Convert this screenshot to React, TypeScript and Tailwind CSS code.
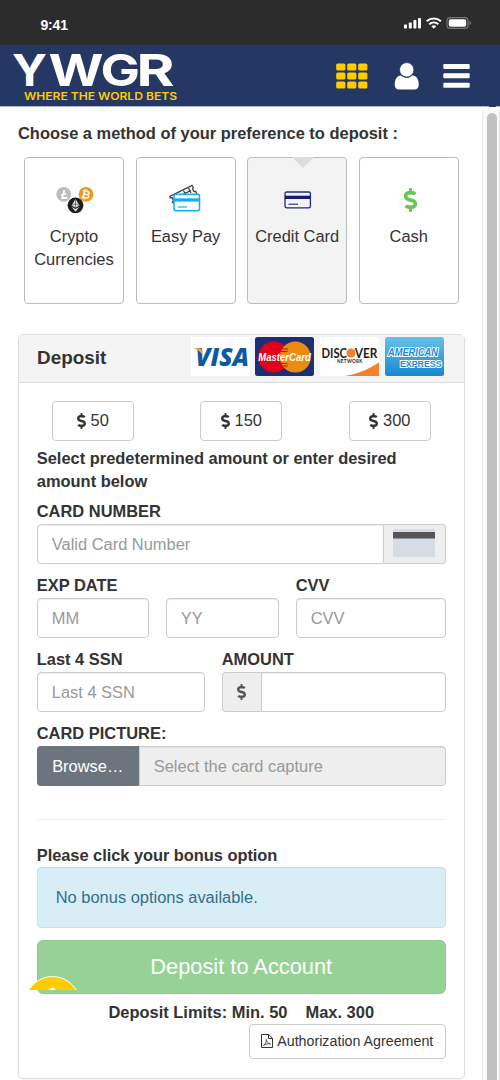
import type { ReactNode } from "react";
import { FaDollarSign } from "react-icons/fa";

function StatusBar() {
  return (
    <div className="flex h-[45px] shrink-0 items-center justify-between bg-[#2c2c2c] pr-[28px] pl-[40.5px] text-white">
      <span className="mt-[5px] font-['Liberation_Sans'] text-[14px] leading-none font-bold tracking-[-0.2px]">9:41</span>
      <svg width="68" height="14" viewBox="0 0 68 14" fill="white">
        <rect x="0" y="8.5" width="3" height="4" rx="0.8" />
        <rect x="4.8" y="6.5" width="3" height="6" rx="0.8" />
        <rect x="9.4" y="4" width="3" height="8.5" rx="0.8" />
        <rect x="14" y="2" width="3" height="10.5" rx="0.8" />
        <path d="M22.7 5.3a10.6 10.6 0 0 1 14.2 0" fill="none" stroke="white" strokeWidth="2.1" />
        <path d="M25.2 8.2a7 7 0 0 1 9.2 0" fill="none" stroke="white" strokeWidth="2" />
        <path d="M27.3 10.3a4 4 0 0 1 5 0L29.8 12.8z" />
        <rect x="43" y="1.6" width="21" height="10.8" rx="3" fill="none" stroke="#777" strokeWidth="1.1" />
        <rect x="44.8" y="3.3" width="17.4" height="7.4" rx="1.6" />
        <path d="M65.5 5v4c2-.6 2-3.4 0-4z" fill="#777" />
      </svg>
    </div>
  );
}

function Logo() {
  return (
    <svg
      className="overflow-visible"
      width="170"
      height="54"
      viewBox="0 0 170 54"
      fontFamily="Inter, 'Liberation Sans', sans-serif"
      fontWeight="700"
    >
      <g fill="white" fontSize="44">
        <text x="0" y="38.2" textLength="35" lengthAdjust="spacingAndGlyphs">Y</text>
        <text x="36.5" y="38.2" textLength="55" lengthAdjust="spacingAndGlyphs">W</text>
        <text x="88.5" y="38.2" textLength="39.5" lengthAdjust="spacingAndGlyphs">G</text>
        <text x="124.5" y="38.2" textLength="38" lengthAdjust="spacingAndGlyphs">R</text>
      </g>
      <text x="12" y="51.6" fontSize="10.3" fontWeight="600" fill="#ffcc00" textLength="153" lengthAdjust="spacingAndGlyphs">
        WHERE THE WORLD BETS
      </text>
    </svg>
  );
}

function Header() {
  return (
    <header className="relative flex h-[62px] shrink-0 items-start justify-between border-b border-[#a9b8d0] bg-[#243863] pr-[30px] pl-[12px]">
      <div className="pt-[3px]">
        <Logo />
      </div>
      <div className="flex items-center pt-[17px]">
        <svg width="32" height="26" viewBox="0 0 32 26" fill="#ffcc00">
          {[0, 9, 18].map((y) =>
            [0, 11, 22].map((x) => <rect key={`${x}-${y}`} x={x + 0.2} y={y + 0.4} width="9.2" height="7.2" rx="1.5" />)
          )}
        </svg>
        <svg className="ml-[26px]" width="26" height="28" viewBox="0 0 26 28" fill="white">
          <path d="M7 13.5C2.5 13.5.7 18 .7 23c0 2.7 1.7 4.5 4.3 4.5h15.4c2.6 0 4.4-1.8 4.4-4.5 0-5-1.8-9.5-6.4-9.5-1.7 1.5-3.7 2.3-5.7 2.3s-4-.8-5.7-2.3z" />
          <circle cx="12.7" cy="7.8" r="7.2" stroke="#243863" strokeWidth="0.8" />
        </svg>
        <svg className="ml-[23px]" width="27" height="26" viewBox="0 0 27 26" fill="white">
          <rect x="0.3" y="1" width="26.4" height="5" rx="1" />
          <rect x="0.3" y="10.3" width="26.4" height="5" rx="1" />
          <rect x="0.3" y="19.7" width="26.4" height="5" rx="1" />
        </svg>
      </div>
      <span className="absolute right-[4px] -bottom-px h-px w-[7px] bg-[#243863]" />
    </header>
  );
}

const CryptoIcon = (
  <svg className="ml-px" width="38" height="28" viewBox="0 0 38 28" fontFamily="'Liberation Sans', sans-serif" fontWeight="700" textAnchor="middle">
    <circle cx="7.7" cy="8.3" r="7.4" fill="#bdbdbd" />
    <path d="M8.3 4 6.3 12h5M5 9.4l5.2-1.8" fill="none" stroke="white" strokeWidth="1.8" />
    <circle cx="30" cy="8.3" r="7.4" fill="#f7931a" />
    <text x="30" y="12.3" fontSize="11" fill="white" transform="rotate(12 30 8.3)">₿</text>
    <circle cx="19.5" cy="19.3" r="7.9" fill="#1c1c1c" />
    <path d="m19.5 13-4 6.5 4 2.3 4-2.3zM15.5 20.8l4 5 4-5-4 2.2z" fill="#ddd" />
    <path d="M19.5 13v9M15.5 19.5l4-1.8 4 1.8" fill="none" stroke="#555" strokeWidth="0.7" />
  </svg>
);

const EasyPayIcon = (
  <svg className="mr-[2px] mb-[5px]" width="34" height="28" viewBox="0 0 34 28" fill="none">
    <g stroke="#444" strokeWidth="1.3">
      <path d="M6 19.500 2.800 18l1.200-1.800-1.300-2.800-2 .2-.3-1.600L22.500 1l1.300 2.300-.7 1.600 1.200 2.200 2 .1 1.200 2.600" transform="translate(1.5 .3)" />
      <path d="m6 14.800 17-8.500M15.500 6.500l2 4M20.500 4l2.500 5M5 17l3-1.600" />
    </g>
    <rect x="6" y="10.3" width="25.5" height="16.4" rx="2" fill="white" stroke="#12b1ee" strokeWidth="1.5" />
    <path d="M6 14.3h25.5v3.3H6z" fill="#12b1ee" />
    <path d="M10 23h9" stroke="#12b1ee" strokeWidth="1.2" />
  </svg>
);

const CreditCardIcon = (
  <svg className="ml-[2px]" width="28" height="18" viewBox="0 0 28 18" fill="none">
    <rect x="1" y="1" width="25.4" height="15.8" rx="1.6" stroke="#1f2a78" strokeWidth="1.3" />
    <path d="M1 4.7h25.5V8H1z" fill="#141c70" />
    <path d="M4.5 13.2H14" stroke="#1f2a78" strokeWidth="1.1" />
  </svg>
);

interface Method {
  label: string;
  icon: ReactNode;
  active?: boolean;
}

const methods: Method[] = [
  { label: "Crypto Currencies", icon: CryptoIcon },
  { label: "Easy Pay", icon: EasyPayIcon },
  { label: "Credit Card", icon: CreditCardIcon, active: true },
  { label: "Cash", icon: <FaDollarSign className="ml-[3px] h-[24px] w-[15px] text-[#6cc655]" /> },
];

function MethodCard({ label, icon, active }: Method) {
  return (
    <button
      className={`relative flex h-[147px] w-[100px] flex-col items-center rounded-[4px] border border-[#bbb] pt-[24px] ${
        active ? "bg-[#f3f3f3]" : "bg-white"
      }`}
    >
      {active && (
        <span className="absolute -top-px left-1/2 ml-[6px] h-0 w-0 -translate-x-1/2 border-x-[11px] border-t-[11px] border-x-transparent border-t-[#dcdcdc]" />
      )}
      <span className="flex h-[36px] items-center justify-center">{icon}</span>
      <span className="mt-[7px] leading-[23px]">{label}</span>
    </button>
  );
}

function CardBrands() {
  return (
    <div className="flex gap-[5.6px]">
      <svg width="59" height="39" viewBox="0 0 59 39">
        <rect width="59" height="39" fill="white" />
        <text x="4.5" y="28.8" fontFamily="'Open Sans', sans-serif" fontWeight="800" fontStyle="italic" fontSize="24.5" fill="#0a5aa4" textLength="53.5" lengthAdjust="spacingAndGlyphs">
          VISA
        </text>
        <path d="M1.5 11.3h7.2c1.1 0 1.7.6 1.9 1.5l1.4 6.5C10 14.8 6.5 12.6 1.5 11.3z" fill="#f9a51a" />
      </svg>
      <svg className="overflow-visible" width="59" height="39" viewBox="0 0 59 39">
        <rect width="59" height="39" rx="2.5" fill="#1b2f73" />
        <circle cx="18.7" cy="20" r="15.5" fill="#e2001a" />
        <circle cx="40.3" cy="20" r="15.5" fill="#ef8a10" />
        <path d="M26 12h7M25.5 14.5h7M25.5 26.5h7M26 29h7" stroke="#e2001a" strokeWidth="1.2" />
        <text x="3.3" y="24.4" fontFamily="'Liberation Sans', sans-serif" fontWeight="700" fontStyle="italic" fontSize="11.5" fill="white" textLength="52.5" lengthAdjust="spacingAndGlyphs">
          MasterCard
        </text>
      </svg>
      <svg width="59" height="39" viewBox="0 0 59 39" fontFamily="Lato, sans-serif">
        <rect width="59" height="39" rx="2.5" fill="white" />
        <g fill="#1c1c1c" fontWeight="700" fontSize="12.8">
          <text x="1.5" y="20.6" textLength="25.5" lengthAdjust="spacingAndGlyphs">DISC</text>
          <text x="34.8" y="20.6" textLength="22.7" lengthAdjust="spacingAndGlyphs">VER</text>
          <text x="17" y="26.2" fontSize="4.6" textLength="25.5">NETWORK</text>
        </g>
        <circle cx="31" cy="16" r="4.5" fill="#f58025" />
        <path d="M25 39c13-2 24-7 34-13.5V39z" fill="#f58025" />
      </svg>
      <svg className="overflow-visible" width="59" height="39" viewBox="0 0 59 39" fontFamily="'Liberation Sans', sans-serif">
        <defs>
          <linearGradient id="amex" x1="0" y1="0" x2="0" y2="1">
            <stop offset="0" stopColor="#65c1e8" />
            <stop offset="1" stopColor="#1689cf" />
          </linearGradient>
        </defs>
        <rect width="59" height="39" rx="2.5" fill="url(#amex)" />
        <g fill="#1c8cd0" stroke="white" strokeWidth="2" paintOrder="stroke" fontWeight="700" fontSize="9.8">
          <text x="3" y="19.2" fontStyle="italic" fontSize="10.5" textLength="50" lengthAdjust="spacingAndGlyphs">AMERICAN</text>
          <text x="15" y="29.6" textLength="41.5" lengthAdjust="spacingAndGlyphs">EXPRESS</text>
        </g>
      </svg>
    </div>
  );
}

const inputClass =
  "h-10 min-w-0 rounded-[4px] border border-[#ccc] bg-white px-[14px] pt-px shadow-[inset_0_1px_1px_rgba(0,0,0,0.075)] placeholder:text-[#999]";

function Field({ label, className, children }: { label: string; className?: string; children: ReactNode }) {
  return (
    <div className={`mb-[9px] min-w-0 ${className ?? ""}`}>
      <label className="block h-[25px] font-bold whitespace-nowrap leading-[25px]">{label}</label>
      <div className="flex">{children}</div>
    </div>
  );
}

function DepositPanel() {
  return (
    <section className="mt-[29.5px] h-[745px] w-[446.5px] shrink-0 rounded-[5px] border border-[#ddd] shadow-[0_1px_1px_rgba(0,0,0,0.05)]">
      <div className="flex h-[48px] items-start justify-between rounded-t-[4px] border-b border-[#ddd] bg-[#f4f4f4] pt-[2px] pr-[20px] pl-[18px]">
        <h2 className="text-[18.9px] leading-[42px] font-bold">Deposit</h2>
        <CardBrands />
      </div>

      <div className="px-[17.75px] pt-[18px]">
        <div className="flex justify-between px-[15px]">
          {[50, 150, 300].map((amount) => (
            <button key={amount} className="flex h-10 w-[82px] items-center justify-center rounded-[4px] border border-[#ccc]">
              <FaDollarSign className="mr-[5px] h-[16px] w-[9px]" />
              {amount}
            </button>
          ))}
        </div>

        <p className="mt-[6px] mb-[5.4px] font-bold">Select predetermined amount or enter desired amount below</p>

        <Field label="CARD NUMBER">
          <input className={`${inputClass} flex-1 rounded-r-none`} placeholder="Valid Card Number" />
          <span className="flex h-10 w-[62px] items-start justify-center rounded-r-[4px] border border-l-0 border-[#ccc] bg-[#eee] pt-[4px]">
            <svg width="42" height="28" viewBox="0 0 42 28">
              <rect width="42" height="28" rx="1" fill="#d5dce6" />
              <rect y="3" width="42" height="6.5" fill="#555" />
            </svg>
          </span>
        </Field>

        <div className="flex">
          <Field label="EXP DATE" className="w-[242px] shrink-0">
            <input className={`${inputClass} w-[112px]`} placeholder="MM" />
            <input className={`${inputClass} ml-[17px] w-[113px]`} placeholder="YY" />
          </Field>
          <Field label="CVV" className="ml-[17px] flex-1">
            <input className={`${inputClass} w-full`} placeholder="CVV" />
          </Field>
        </div>

        <div className="flex">
          <Field label="Last 4 SSN" className="w-[168px] shrink-0">
            <input className={`${inputClass} w-full`} placeholder="Last 4 SSN" />
          </Field>
          <Field label="AMOUNT" className="ml-[17px] flex-1">
            <span className="flex h-10 w-[39px] shrink-0 items-center justify-center rounded-l-[4px] border border-r-0 border-[#ccc] bg-[#eee] text-[#555]">
              <FaDollarSign className="h-[16px] w-[9px]" />
            </span>
            <input className={`${inputClass} flex-1 rounded-l-none`} />
          </Field>
        </div>

        <Field label="CARD PICTURE:">
          <button className="h-10 w-[102px] rounded-l-[4px] bg-[#6c757d] pt-px text-white">Browse…</button>
          <span className="flex h-10 flex-1 items-center rounded-r-[4px] border border-[#ccc] bg-[#eee] pt-px pl-[14px] text-[#999] shadow-[inset_0_1px_1px_rgba(0,0,0,0.075)]">
            Select the card capture
          </span>
        </Field>

        <hr className="mt-[33px] border-[#eee]" />

        <p className="mt-[24px] font-bold tracking-[-0.05px]">Please click your bonus option</p>
        <div className="flex h-[61px] items-center rounded-[4px] border border-[#bce8f1] bg-[#d9edf7] pt-px pl-[18px] text-[#31708f]">
          No bonus options available.
        </div>

        <div className="relative mt-[12px] h-[54px]">
          <button className="h-[54px] w-full rounded-[6px] border border-[#8acb8a] bg-[#96d296] pb-px text-[21.8px] text-white">
            Deposit to Account
          </button>
          {/* chat bubble peeking over the button's corner */}
          <svg className="absolute top-[36px] left-[-9px]" width="50" height="14" viewBox="0 0 50 14">
            <circle cx="24.5" cy="28" r="27.5" fill="#ffcc00" stroke="white" strokeWidth="1" />
            <circle cx="24.5" cy="14.5" r="3" fill="white" />
          </svg>
        </div>

        <p className="mt-[6.5px] text-center font-bold">
          Deposit Limits: Min. 50<span className="ml-[18px]">Max. 300</span>
        </p>
        <button className="ml-auto flex h-[35px] w-[197px] items-center justify-center rounded-[4px] border border-[#ccc] text-[14.25px] whitespace-nowrap">
          <svg className="mr-[4px]" width="12" height="14" viewBox="0 0 12 14" fill="none" stroke="currentColor">
            <path d="M.5.5h7.2l3.800 3.800v9.200H.5zM7.500.5v4h4" />
            <path d="M2.500 11.500c1.500-1 3-3.500 2.800-6 .5 2.500 1.700 4 4.200 4.500-2-.6-5 0-7 1.500z" strokeWidth="0.8" />
          </svg>
          Authorization Agreement
        </button>
      </div>
    </section>
  );
}

export default function App() {
  return (
    <div className="flex h-[1080px] w-[500px] flex-col overflow-hidden bg-white font-['Liberation_Sans',Arial,sans-serif] text-[16.45px] leading-[23.3px] text-[#333]">
      <StatusBar />
      <Header />
      <div className="flex min-h-0 flex-1">
        <main className="flex w-[482px] flex-col pt-[15px] pl-[18px]">
          <h1 className="font-bold">Choose a method of your preference to deposit :</h1>
          <div className="mt-[12px] ml-[6px] flex shrink-0 gap-[11.6px]">
            {methods.map((method) => (
              <MethodCard key={method.label} {...method} />
            ))}
          </div>
          <DepositPanel />
        </main>
        <div className="mt-[3px] flex w-[18px] border-x border-[#e8e8e8] bg-[#fafafa] pt-[3px] pl-[4px]">
          <div className="w-[10px] rounded-t-full bg-[#c1c1c1]" />
        </div>
      </div>
    </div>
  );
}
